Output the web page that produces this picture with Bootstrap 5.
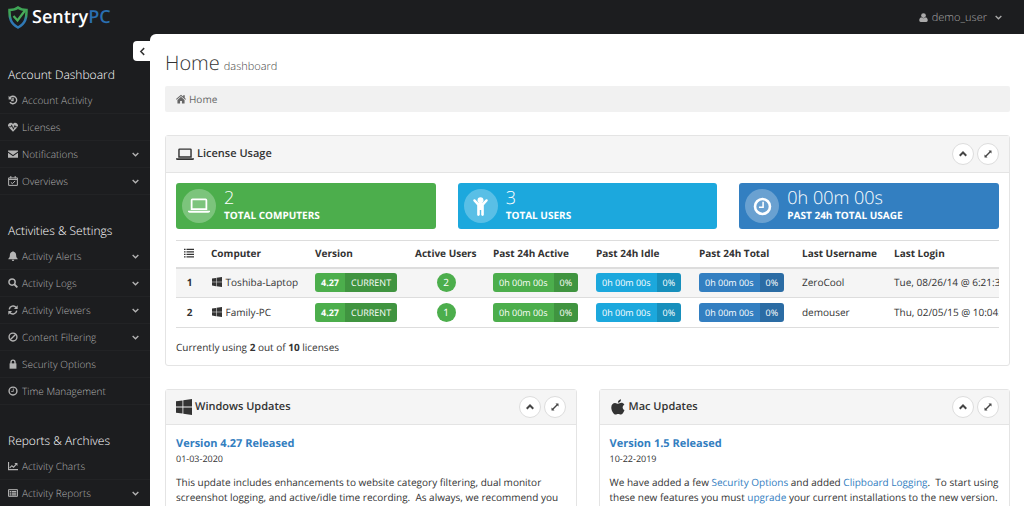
<!DOCTYPE html>
<html lang="en">
<head>
<meta charset="utf-8">
<meta name="viewport" content="width=device-width, initial-scale=1">
<title>SentryPC - Home</title>
<link href="https://cdn.jsdelivr.net/npm/bootstrap@5.3.0/dist/css/bootstrap.min.css" rel="stylesheet">
<style>
  body { font-family: "Open Sans", "Liberation Sans", sans-serif; font-size: 10px; line-height: 15px; color: #333; background: #1c1d1f; text-rendering: geometricPrecision; }
  a { color: #337ebf; text-decoration: none; }
  .ico { width: 1em; height: 1em; fill: currentColor; flex: none; }

  .topbar { height: 34px; padding: 0 22px 0 8px; }
  .brand { color: #fff; font-size: 18px; line-height: 24px; font-weight: 600; gap: 4px; }
  .brand:hover { color: #fff; }
  .brand svg { width: 20px; height: 23px; }
  .brand .tail { color: #2a6fb0; }
  .account { color: #aaa; font-size: 11px; font-weight: 300; gap: 4px; }
  .account .ico { font-size: 9px; }

  .shell { min-height: 0; }
  .side { width: 150px; padding-top: 5px; }
  .side h2 { font-size: 12px; line-height: 19px; font-weight: 300; color: #fff; margin: 0; padding: 26px 8px 3px; }
  .side a { color: #b4b4b4; font-weight: 300; height: 27px; padding: 0 11px 0 8px; gap: 4px; border-bottom: 1px solid #222325; }
  .side .ico { font-size: 10px; }
  .side .chev, .account .chev { font-size: 7px; }

  .page { border-top-left-radius: 6px; padding: 0 14px 0 15px; min-width: 0; }
  .fold { left: -17px; top: 7px; width: 18px; height: 20px; border: 0; background: #fff; color: #333; border-radius: 4px 0 0 4px; font-size: 9px; }
  .page h1 { font-size: 20px; line-height: 28px; font-weight: 300; margin: 15px 0 5px; gap: 4px; color: #333; }
  .page h1 small { font-size: 11px; font-weight: 300; color: #444; }
  .crumbs { background: #f1f1f1; height: 26px; padding: 0 11px; margin-bottom: 23px; border-radius: 2px; }
  .crumbs a { color: #666; gap: 3px; }

  .panel { border: 1px solid #e4e4e4; border-radius: 3px; }
  .panel-top { background: #f5f5f5; border-bottom: 1px solid #e4e4e4; height: 37px; padding: 0 10px; }
  .panel-top h2 { font-size: 11px; line-height: 16px; font-weight: 600; margin: 0; gap: 3px; color: #333; }
  .panel-top .wide { width: 18px; height: 15px; }
  .panel-top .big { width: 16px; height: 16px; }
  .panel-body { padding: 10px; }
  .tools { gap: 3px; }
  .round { width: 22px; height: 22px; border-radius: 50%; border: 1px solid #ddd; background: #fff; color: #444; font-size: 8px; padding: 0; }

  .tiles { --bs-gutter-x: 22px; }
  .tile { height: 46px; border-radius: 3px; color: #fff; padding: 0 6px; gap: 8px; }
  .tile-disc { width: 34px; height: 34px; border-radius: 50%; background: rgba(255,255,255,.27); font-size: 19px; flex: none; }
  .tile-disc .wide { width: 22px; height: 18px; }
  .tile-num { font-size: 18px; line-height: 19px; font-weight: 300; }
  .tile-cap { font-size: 10px; line-height: 15px; font-weight: 700; }
  .c-green { background: #4cae4c; }
  .c-sky { background: #1ca8dd; }
  .c-blue { background: #337fc1; }

  .scroller { overflow-x: auto; scrollbar-width: none; margin-top: 11px; }
  .licenses { table-layout: fixed; width: 100%; min-width: 842px; white-space: nowrap; border-top: 1px solid #ddd; margin: 0; }
  .licenses th, .licenses td { padding: 0 8px; text-align: left; }
  .licenses th { font-weight: 700; }
  .licenses thead th { height: 27px; border-bottom: 2px solid #ddd; }
  .licenses .ico { vertical-align: -1px; }
  .licenses td .ico { margin: 0 1px; }
  .licenses tbody tr { height: 30px; border-bottom: 1px solid #ddd; }
  .licenses tbody tr:nth-child(odd) { background: #f5f5f5; }
  .licenses .mid { text-align: center; }
  .w-no { width: 27px; } .w-name { width: 104px; } .w-ver { width: 100px; } .w-act { width: 78px; }
  .w-time { width: 103px; } .w-user { width: 92px; }
  .pill { display: inline-flex; height: 19px; line-height: 19px; border-radius: 3px; color: #fff; font-size: 9px; overflow: hidden; vertical-align: middle; }
  .pill span { padding: 0 6px; }
  .pill span + span { background: rgba(0,0,0,.15); }
  .pill .ver { font-weight: 700; }
  .count { display: inline-block; width: 19px; height: 19px; line-height: 19px; border-radius: 50%; color: #fff; text-align: center; vertical-align: middle; }

  .first-panel { margin-bottom: 23px; }
  .update .panel-top { height: 35px; }
  .update h3 { font-size: 11px; line-height: 17px; font-weight: 700; margin: 0; }
  .update time { font-size: 9px; line-height: 13px; display: block; margin-bottom: 10px; }
</style>
</head>
<body class="vh-100 overflow-hidden d-flex flex-column">

<svg class="d-none" xmlns="http://www.w3.org/2000/svg">
  <symbol id="down" viewBox="0 0 16 16"><path d="M1.500 4.500L8 11l6.500-6.500" fill="none" stroke="currentColor" stroke-width="3"/></symbol>
  <symbol id="up" viewBox="0 0 16 16"><path d="M1.500 11.500L8 5l6.500 6.500" fill="none" stroke="currentColor" stroke-width="4"/></symbol>
  <symbol id="left" viewBox="0 0 16 16"><path d="M11 2L5 8l6 6" fill="none" stroke="currentColor" stroke-width="2.600"/></symbol>
  <symbol id="expand" viewBox="0 0 16 16"><path d="M9 1h6v6l-2.100-2.100L5 13l2 2H1V9l2 2 8-8z"/></symbol>
  <symbol id="user" viewBox="0 0 16 16"><circle cx="8" cy="4.500" r="4.200"/><path d="M4 7.500c2.500 2.500 5.500 2.500 8 0 2.500.5 3.500 3 3.500 5.500 0 2-1 3-2.500 3H3c-1.500 0-2.500-1-2.500-3 0-2.500 1-5 3.500-5.500z"/></symbol>
  <symbol id="history" viewBox="0 0 16 16"><path d="M3 4.500A6 6 0 1 1 3 11.500M8 4.500V9H5" fill="none" stroke="currentColor" stroke-width="2.200"/><path d="M1 1v6h6z"/></symbol>
  <symbol id="heart" viewBox="0 0 16 16"><path d="M0 7C-.5 3 2 1 4.500 1 6 1 7.300 2 8 3c.7-1 2-2 3.500-2C14 1 16.500 3 16 7h-3.500L11 4.500 8.500 9.500 6 4 4 7zM1 8.500h4l1-1.800 2.500 5.800L11 7.500l.7 1H15L8 15.500z"/></symbol>
  <symbol id="mail" viewBox="0 0 16 16"><path d="M0 2.500h16v1.300L8 9.500 0 3.800zM0 6l8 5.500L16 6v8H0z"/></symbol>
  <symbol id="cal" viewBox="0 0 16 16"><path d="M1 3h14v12H1zM1 5.500h14M4.500 0v4M11.500 0v4M4.500 10l2.500 2.300 4.500-4.500" fill="none" stroke="currentColor" stroke-width="1.600"/></symbol>
  <symbol id="bell" viewBox="0 0 16 16"><path d="M8 0l1 1.300c3 .6 4 2.700 4 5.200 0 3 .8 4.500 2.500 6v.8H.5v-.8C2.200 11 3 9.500 3 6.500 3 4 4 1.900 7 1.300zM6 14h4a2 2 0 0 1-4 0z"/></symbol>
  <symbol id="search" viewBox="0 0 16 16"><circle cx="6.500" cy="6.500" r="5" fill="none" stroke="currentColor" stroke-width="2.400"/><path d="M10 10l5 5" stroke="currentColor" stroke-width="3"/></symbol>
  <symbol id="refresh" viewBox="0 0 16 16"><path d="M2 7a6.200 6.200 0 0 1 11-3M14 9a6.200 6.200 0 0 1-11 3" fill="none" stroke="currentColor" stroke-width="2.300"/><path d="M15.500.5V6.500h-6zM.5 15.500v-6h6z"/></symbol>
  <symbol id="ban" viewBox="0 0 16 16"><circle cx="8" cy="8" r="6.300" fill="none" stroke="currentColor" stroke-width="2.200"/><path d="M3.500 12.500l9-9" stroke="currentColor" stroke-width="2.200"/></symbol>
  <symbol id="lock" viewBox="0 0 16 16"><path d="M2.500 7h11v8.500h-11z"/><path d="M4.800 8V5a3.200 3.200 0 0 1 6.400 0v3" fill="none" stroke="currentColor" stroke-width="2.200"/></symbol>
  <symbol id="clock" viewBox="0 0 16 16"><circle cx="8" cy="8" r="6.300" fill="none" stroke="currentColor" stroke-width="2.200"/><path d="M8.500 4v4.700H5" fill="none" stroke="currentColor" stroke-width="1.300"/></symbol>
  <symbol id="chart" viewBox="0 0 18 16"><path d="M1 1v13.500h17M3 11.500l4-4 3 2.500 5-5.500" fill="none" stroke="currentColor" stroke-width="2"/><path d="M11.500 2.500H17V8z"/></symbol>
  <symbol id="report" viewBox="0 0 18 16"><path d="M1 2h16v12H1z" fill="none" stroke="currentColor" stroke-width="1.800"/><path d="M3 4.500h3v2.200H3zm4 0h8v2.200H7zM3 7.500h3v2H3zm4 0h8v2H7zM3 10.300h3v2H3zm4 0h8v2H7z"/></symbol>
  <symbol id="home" viewBox="0 0 16 16"><path d="M8 1l3.500 3V2H14v4.200l2 1.900-1 1.100L8 3.100 1 9.200 0 8.100zM8 4.500l5.700 5V15H9.500v-4h-3v4H2.300V9.500z"/></symbol>
  <symbol id="laptop" viewBox="0 0 20 16"><path d="M4 2h12a.7.7 0 0 1 .7.7v8.100H3.300V2.700A.7.700 0 0 1 4 2z" fill="none" stroke="currentColor" stroke-width="1.600"/><path d="M0 12.300h20v.8c0 .7-.8 1-1.500 1h-17c-.7 0-1.500-.3-1.500-1z"/></symbol>
  <symbol id="child" viewBox="0 0 16 16"><circle cx="8" cy="2.800" r="2.500"/><path d="M2.200 2.200c.4-.4 1-.4 1.400 0L6.500 5.100h3l2.900-2.900c1-.9 2.300.4 1.400 1.400L10.800 7V15c0 1.200-2 1.200-2.200 0v-4H7.400v4c-.2 1.200-2.200 1.200-2.200 0V7L2.200 3.600c-.4-.4-.4-1 0-1.400z"/></symbol>
  <symbol id="list" viewBox="0 0 16 16"><path d="M0 1h2.500v2H0zm4 0H16v2H4zM0 5h2.500v2H0zm4 0H16v2H4zM0 9h2.500v2H0zm4 0H16v2H4zM0 13h2.500v2H0zm4 0H16v2H4z"/></symbol>
  <symbol id="win" viewBox="0 0 16 16"><path d="M0 2.300l6.500-.9v6.200H0zM7.300 1.300L16 0v7.600H7.300zM0 8.400h6.500v6.200L0 13.700zM7.300 8.400H16V16l-8.700-1.200z"/></symbol>
  <symbol id="apple" viewBox="0 0 14 16"><path d="M13.500 11c-.9 2.500-2.200 4.600-3.700 4.600-1 0-1.500-.6-2.600-.6s-1.700.6-2.600.6C2.700 15.600.3 12 .3 8.500.3 5.500 2 3.900 4.100 3.900c1.200 0 2.200.8 3 .8.700 0 1.900-.9 3.300-.9 1 0 2.200.5 3 1.600-2.500 1.600-2.100 4.700.1 5.600zM10 .2c.2 1.800-1.300 3.500-3.100 3.500C6.700 1.900 8.300.4 10 .2z"/></symbol>
</svg>

<header class="topbar d-flex align-items-center justify-content-between flex-shrink-0">
  <a class="brand d-flex align-items-center" href="#">
    <svg viewBox="0 0 40 46" aria-hidden="true">
      <defs><linearGradient id="shade" x1="0" y1="0" x2="0" y2="1"><stop offset=".35" stop-color="#3fa556"/><stop offset=".65" stop-color="#2f79b5"/></linearGradient></defs>
      <path d="M20 3c5 4 10 5 17 5 .5 16-2 27-17 35C5 35 2.500 24 3 8c7 0 12-1 17-5z" fill="none" stroke="url(#shade)" stroke-width="5"/>
      <path d="M11 20l8 9L34 9" fill="none" stroke="#49ad5a" stroke-width="4.500"/>
    </svg>
    <span>Sentry<span class="tail">PC</span></span>
  </a>
  <a class="account d-flex align-items-center" href="#"><svg class="ico"><use href="#user"/></svg>demo_user<svg class="ico chev ms-1"><use href="#down"/></svg></a>
</header>

<div class="shell d-flex flex-grow-1">
  <nav class="side flex-shrink-0" aria-label="Main">
    <h2>Account Dashboard</h2>
    <a class="d-flex align-items-center" href="#"><svg class="ico"><use href="#history"/></svg>Account Activity</a>
    <a class="d-flex align-items-center" href="#"><svg class="ico"><use href="#heart"/></svg>Licenses</a>
    <a class="d-flex align-items-center" href="#"><svg class="ico"><use href="#mail"/></svg>Notifications<svg class="ico chev ms-auto"><use href="#down"/></svg></a>
    <a class="d-flex align-items-center" href="#"><svg class="ico"><use href="#cal"/></svg>Overviews<svg class="ico chev ms-auto"><use href="#down"/></svg></a>
    <h2>Activities &amp; Settings</h2>
    <a class="d-flex align-items-center" href="#"><svg class="ico"><use href="#bell"/></svg>Activity Alerts<svg class="ico chev ms-auto"><use href="#down"/></svg></a>
    <a class="d-flex align-items-center" href="#"><svg class="ico"><use href="#search"/></svg>Activity Logs<svg class="ico chev ms-auto"><use href="#down"/></svg></a>
    <a class="d-flex align-items-center" href="#"><svg class="ico"><use href="#refresh"/></svg>Activity Viewers<svg class="ico chev ms-auto"><use href="#down"/></svg></a>
    <a class="d-flex align-items-center" href="#"><svg class="ico"><use href="#ban"/></svg>Content Filtering<svg class="ico chev ms-auto"><use href="#down"/></svg></a>
    <a class="d-flex align-items-center" href="#"><svg class="ico"><use href="#lock"/></svg>Security Options</a>
    <a class="d-flex align-items-center" href="#"><svg class="ico"><use href="#clock"/></svg>Time Management</a>
    <h2>Reports &amp; Archives</h2>
    <a class="d-flex align-items-center" href="#"><svg class="ico"><use href="#chart"/></svg>Activity Charts</a>
    <a class="d-flex align-items-center" href="#"><svg class="ico"><use href="#report"/></svg>Activity Reports<svg class="ico chev ms-auto"><use href="#down"/></svg></a>
  </nav>

  <main class="page bg-white flex-grow-1 position-relative">
    <button class="fold position-absolute d-flex align-items-center justify-content-center p-0" type="button" aria-label="Collapse menu"><svg class="ico"><use href="#left"/></svg></button>
    <h1 class="d-flex align-items-baseline">Home <small>dashboard</small></h1>
    <nav class="crumbs d-flex align-items-center" aria-label="Breadcrumb"><a class="d-flex align-items-center" href="#"><svg class="ico"><use href="#home"/></svg>Home</a></nav>

    <section class="panel first-panel">
      <div class="panel-top d-flex align-items-center justify-content-between">
        <h2 class="d-flex align-items-center"><svg class="ico wide"><use href="#laptop"/></svg>License Usage</h2>
        <div class="tools d-flex">
          <button class="round d-flex align-items-center justify-content-center" type="button" aria-label="Collapse"><svg class="ico"><use href="#up"/></svg></button>
          <button class="round d-flex align-items-center justify-content-center" type="button" aria-label="Expand"><svg class="ico"><use href="#expand"/></svg></button>
        </div>
      </div>
      <div class="panel-body">
        <div class="row tiles">
          <div class="col-4"><div class="tile c-green d-flex align-items-center"><span class="tile-disc d-flex align-items-center justify-content-center"><svg class="ico wide"><use href="#laptop"/></svg></span><div><div class="tile-num">2</div><div class="tile-cap">TOTAL COMPUTERS</div></div></div></div>
          <div class="col-4"><div class="tile c-sky d-flex align-items-center"><span class="tile-disc d-flex align-items-center justify-content-center"><svg class="ico"><use href="#child"/></svg></span><div><div class="tile-num">3</div><div class="tile-cap">TOTAL USERS</div></div></div></div>
          <div class="col-4"><div class="tile c-blue d-flex align-items-center"><span class="tile-disc d-flex align-items-center justify-content-center"><svg class="ico"><use href="#clock"/></svg></span><div><div class="tile-num">0h 00m 00s</div><div class="tile-cap">PAST 24h TOTAL USAGE</div></div></div></div>
        </div>
        <div class="scroller">
          <table class="licenses">
            <thead><tr>
              <th class="w-no"><svg class="ico"><use href="#list"/></svg></th><th class="w-name">Computer</th><th class="w-ver">Version</th><th class="w-act">Active Users</th>
              <th class="w-time">Past 24h Active</th><th class="w-time">Past 24h Idle</th><th class="w-time">Past 24h Total</th><th class="w-user">Last Username</th><th>Last Login</th>
            </tr></thead>
            <tbody>
              <tr><th class="mid">1</th><td><svg class="ico"><use href="#win"/></svg> Toshiba-Laptop</td><td><span class="pill c-green"><span class="ver">4.27</span><span>CURRENT</span></span></td><td class="mid"><span class="count c-green">2</span></td>
                <td><span class="pill c-green"><span>0h 00m 00s</span><span>0%</span></span></td><td><span class="pill c-sky"><span>0h 00m 00s</span><span>0%</span></span></td><td><span class="pill c-blue"><span>0h 00m 00s</span><span>0%</span></span></td><td>ZeroCool</td><td>Tue, 08/26/14 @ 6:21:33 pm</td></tr>
              <tr><th class="mid">2</th><td><svg class="ico"><use href="#win"/></svg> Family-PC</td><td><span class="pill c-green"><span class="ver">4.27</span><span>CURRENT</span></span></td><td class="mid"><span class="count c-green">1</span></td>
                <td><span class="pill c-green"><span>0h 00m 00s</span><span>0%</span></span></td><td><span class="pill c-sky"><span>0h 00m 00s</span><span>0%</span></span></td><td><span class="pill c-blue"><span>0h 00m 00s</span><span>0%</span></span></td><td>demouser</td><td>Thu, 02/05/15 @ 10:04:12 am</td></tr>
            </tbody>
          </table>
        </div>
        <p class="mb-0 mt-2 pt-1">Currently using <b>2</b> out of <b>10</b> licenses</p>
      </div>
    </section>

    <div class="row tiles">
      <div class="col-6"><section class="panel update">
        <div class="panel-top d-flex align-items-center justify-content-between">
          <h2 class="d-flex align-items-center"><svg class="ico big"><use href="#win"/></svg>Windows Updates</h2>
          <div class="tools d-flex">
            <button class="round d-flex align-items-center justify-content-center" type="button" aria-label="Collapse"><svg class="ico"><use href="#up"/></svg></button>
            <button class="round d-flex align-items-center justify-content-center" type="button" aria-label="Expand"><svg class="ico"><use href="#expand"/></svg></button>
          </div>
        </div>
        <div class="panel-body">
          <h3><a href="#">Version 4.27 Released</a></h3><time datetime="2020-01-03">01-03-2020</time>
          <p>This update includes enhancements to website category filtering, dual monitor screenshot logging, and active/idle time recording.&nbsp; As always, we recommend you</p>
        </div>
      </section></div>
      <div class="col-6"><section class="panel update">
        <div class="panel-top d-flex align-items-center justify-content-between">
          <h2 class="d-flex align-items-center"><svg class="ico big"><use href="#apple"/></svg>Mac Updates</h2>
          <div class="tools d-flex">
            <button class="round d-flex align-items-center justify-content-center" type="button" aria-label="Collapse"><svg class="ico"><use href="#up"/></svg></button>
            <button class="round d-flex align-items-center justify-content-center" type="button" aria-label="Expand"><svg class="ico"><use href="#expand"/></svg></button>
          </div>
        </div>
        <div class="panel-body">
          <h3><a href="#">Version 1.5 Released</a></h3><time datetime="2019-10-22">10-22-2019</time>
          <p>We have added a few <a href="#">Security Options</a> and added <a href="#">Clipboard Logging</a>.&nbsp; To start using these new features you must <a href="#">upgrade</a> your current installations to the new version.</p>
        </div>
      </section></div>
    </div>
  </main>
</div>
<script src="https://cdn.jsdelivr.net/npm/bootstrap@5.3.0/dist/js/bootstrap.bundle.min.js"></script>
</body>
</html>
